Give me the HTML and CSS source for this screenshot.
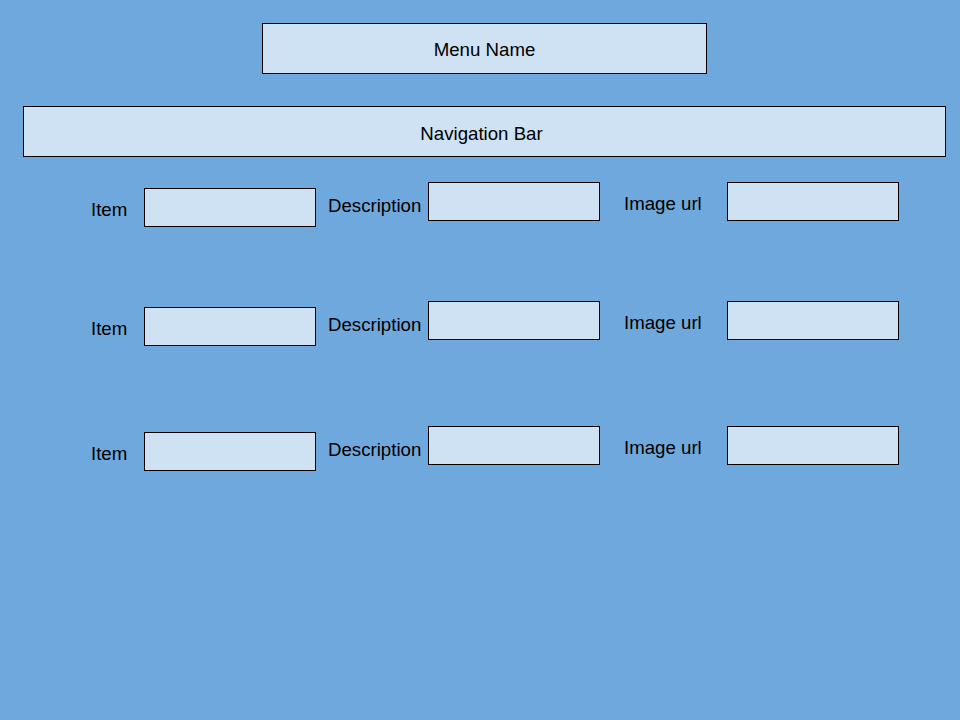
FILE: index.html
```html
<!DOCTYPE html>
<html lang="en">
<head>
  <meta charset="UTF-8">
  <title>Menu Editor</title>
  <link rel="stylesheet" href="styles.css">
</head>
<body>
  <div class="page">
    <div class="box menu-name">Menu Name</div>
    <div class="box nav-bar">Navigation Bar</div>

    <!-- item rows -->
    <div class="item-row first">
      <span class="label label-item">Item</span>
      <div class="box field field-item"></div>
      <span class="label label-desc">Description</span>
      <div class="box field"></div>
      <span class="label label-img">Image url</span>
      <div class="box field"></div>
    </div>

    <div class="item-row second">
      <span class="label label-item">Item</span>
      <div class="box field field-item"></div>
      <span class="label label-desc">Description</span>
      <div class="box field"></div>
      <span class="label label-img">Image url</span>
      <div class="box field"></div>
    </div>

    <div class="item-row third">
      <span class="label label-item">Item</span>
      <div class="box field field-item"></div>
      <span class="label label-desc">Description</span>
      <div class="box field"></div>
      <span class="label label-img">Image url</span>
      <div class="box field"></div>
    </div>
  </div>
</body>
</html>
```

FILE: styles.css
```css
html, body { margin: 0; height: 100%; }
body {
  background: #6fa8dc;
  font-family: "Liberation Sans", Arial, sans-serif;
  font-size: 14pt;
  color: #000;
}
.page { padding-top: 23px; }

.box {
  box-sizing: border-box;
  background: #cfe2f3;
  border: 1px solid #000;
}
.menu-name, .nav-bar {
  height: 51px;
  display: flex;
  align-items: center;
  justify-content: center;
}
.menu-name { margin-left: 262px; width: 445px; padding-top: 2px; }
.nav-bar { margin: 32px 0 0 23px; width: 923px; padding: 4px 6px 0 0; }

.item-row {
  display: flex;
  align-items: flex-start;
  padding-left: 91px;
}
.item-row.first { margin-top: 25px; }
.item-row.second { margin-top: 74px; }
.item-row.third { margin-top: 80px; }

.label { line-height: 22px; }
.label-item { width: 53px; margin-top: 17px; }
.label-desc { width: 100px; margin: 13px 0 0 12px; }
.label-img { width: 103px; margin: 11px 0 0 24px; }

.field { width: 172px; height: 39px; }
.field-item { margin-top: 6px; }
```
